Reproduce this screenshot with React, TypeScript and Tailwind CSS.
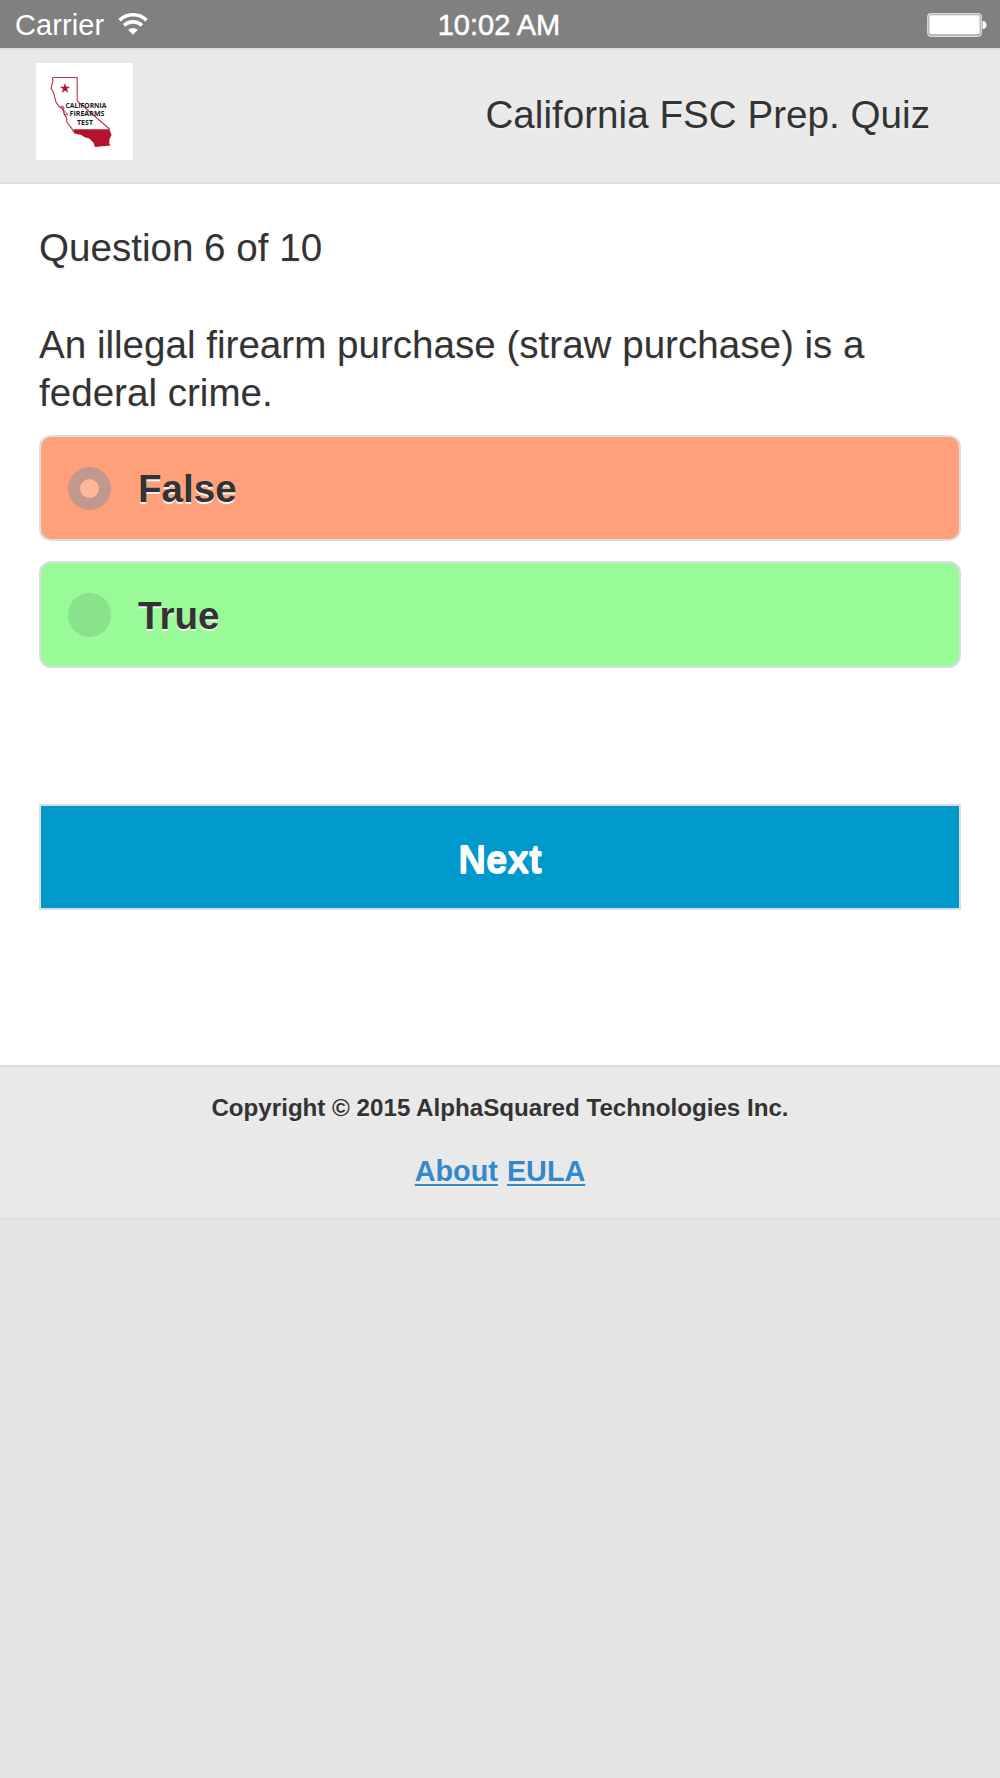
const answers = [
  { label: 'False', checked: true },
  { label: 'True', checked: false },
]

function WifiIcon() {
  return (
    <svg className="w-[30px] h-[22px] -mt-[4px]" viewBox="0 0 30 22" fill="none" stroke="white" strokeWidth="3.6">
      <path d="M1.5 7.3a19.3 19.3 0 0 1 27 0" />
      <path d="M6.1 12.6a12.6 12.6 0 0 1 17.8 0" />
      <path d="M15 21.8l-4.8-5a7 7 0 0 1 9.6 0z" fill="white" stroke="none" />
    </svg>
  )
}

function BatteryIcon() {
  return (
    <svg className="w-[60px] h-6 mt-[2px]" viewBox="0 0 60 24">
      <rect x="0.7" y="0.7" width="53.6" height="22.6" rx="3.5" fill="#aaaaaa" stroke="#dedede" strokeWidth="1.2" />
      <rect x="2.4" y="2.2" width="50.2" height="19" rx="2" fill="white" />
      <path d="M55.5 8a4 4 0 0 1 0 8z" fill="white" />
    </svg>
  )
}

function Logo() {
  return (
    <svg className="w-[97px] h-[97px] bg-white" viewBox="0 0 97 97">
      <path
        d="M16.5 14.5H41.2V38L74 66.5M16.5 14.5l.4 4-1.2 4-.6 3 2.6 4.2 1.1 5 1.4 5 3.5 4.3 3.8 2.2.6 5 2.4 3.2.4 5 4.8 6 2.4 4"
        fill="none"
        stroke="#b93148"
        strokeWidth="1.1"
      />
      <path d="M25 43l3 1-.6 3 3.2 3 1.2 2-3-.5-2-4z" fill="none" stroke="#b93148" strokeWidth="0.9" />
      <path d="M37.7 66.2H73.2l2.4 5.6-2 4.2-.4 4.2 1.2 2.2L59 83.9l-1.6-4.3-4.6-4.3-4.2-1-3.2-2.4-7.1-1.5z" fill="#b51230" />
      <path d="M29 20l1.2 3.7h4L31 26l1.2 4-3.2-2.4-3.2 2.4 1.2-4-3.2-2.3h4z" fill="#b51230" />
      <g fill="#182022" fontFamily="'Open Sans', sans-serif" fontWeight="700" fontSize="7.4" textAnchor="middle">
        <text x="50" y="44.8" textLength="41" lengthAdjust="spacingAndGlyphs">CALIFORNIA</text>
        <text x="51" y="53.3" textLength="35" lengthAdjust="spacingAndGlyphs">FIREARMS</text>
        <text x="49" y="62" textLength="16" lengthAdjust="spacingAndGlyphs">TEST</text>
      </g>
    </svg>
  )
}

export default function App() {
  return (
    <div className="flex flex-col h-[1778px] bg-[#e4e4e4] font-['Liberation_Sans',Arial,sans-serif] text-[#333333] text-[38.6px] leading-[48.5px]">
      {/* Status bar */}
      <div className="grid grid-cols-3 items-center h-12 pl-[15px] pr-[13px] bg-[#808080] text-white text-[29px] leading-none">
        <div className="flex items-center gap-[14px] pt-[3px]">
          <span className="tracking-[0.1px]">Carrier</span>
          <WifiIcon />
        </div>
        <span className="text-center pt-[3px] pr-[4px] [-webkit-text-stroke:0.5px_white]">10:02 AM</span>
        <div className="flex justify-end">
          <BatteryIcon />
        </div>
      </div>

      {/* Header */}
      <header className="flex justify-between h-[136px] pl-9 pr-[70px] bg-[#e9e9e9] border-y-[2.4px] border-[#dddddd]">
        <div className="pt-[13px]">
          <Logo />
        </div>
        <h1 className="pt-[41px] tracking-[0.03px] [text-shadow:0_2px_0_#eeeeee]">California FSC Prep. Quiz</h1>
      </header>

      {/* Question */}
      <main className="h-[881px] px-[39px] pt-10 bg-white [text-shadow:0_2px_0_#f3f3f3]">
        <p>Question 6 of 10</p>
        <p className="mt-[48px] w-[900px]">An illegal firearm purchase (straw purchase) is a federal crime.</p>
        <div className="flex flex-col gap-5 mt-[17px] font-bold [text-shadow:0_2.4px_0_#f3f3f3]">
          {answers.map(({ label, checked }) => (
            <label
              key={label}
              className={`flex items-center gap-[27px] h-[106.5px] pt-px pl-[26.5px] border-[2.4px] border-[#dddddd] rounded-xl ${checked ? 'bg-[#ffa07a]' : 'bg-[#98fb98]'}`}
            >
              <span
                className={`flex items-center justify-center size-[43.5px] rounded-full ${checked ? 'bg-[#c1978f]' : 'bg-[#8ae38a]'}`}
              >
                {checked && <span className="size-[19.5px] rounded-full bg-[#ffb799]" />}
              </span>
              <span className="pt-[2px]">{label}</span>
            </label>
          ))}
        </div>
        <button className="block w-full h-[106px] pt-[6px] mt-[136px] bg-[#0099cc] border-[2.4px] border-[#dddddd] text-white font-bold [text-shadow:0_2.4px_0_#f3f3f3,0_1px_0_#ffffff]">
          Next
        </button>
      </main>

      {/* Footer */}
      <footer className="h-[155px] pt-[26px] bg-[#e9e9e9] border-y-[2.4px] border-[#dddddd] text-center font-bold [text-shadow:0_2px_0_#eeeeee]">
        <p className="text-[24.15px] leading-[30px]">Copyright © 2015 AlphaSquared Technologies Inc.</p>
        <p className="mt-[30px] text-[28.8px] leading-9 text-[#3388cc] [word-spacing:1px]">
          <a className="underline decoration-2 underline-offset-[3px]" href="#about">About</a>{' '}
          <a className="underline decoration-2 underline-offset-[3px]" href="#eula">EULA</a>
        </p>
      </footer>
    </div>
  )
}
